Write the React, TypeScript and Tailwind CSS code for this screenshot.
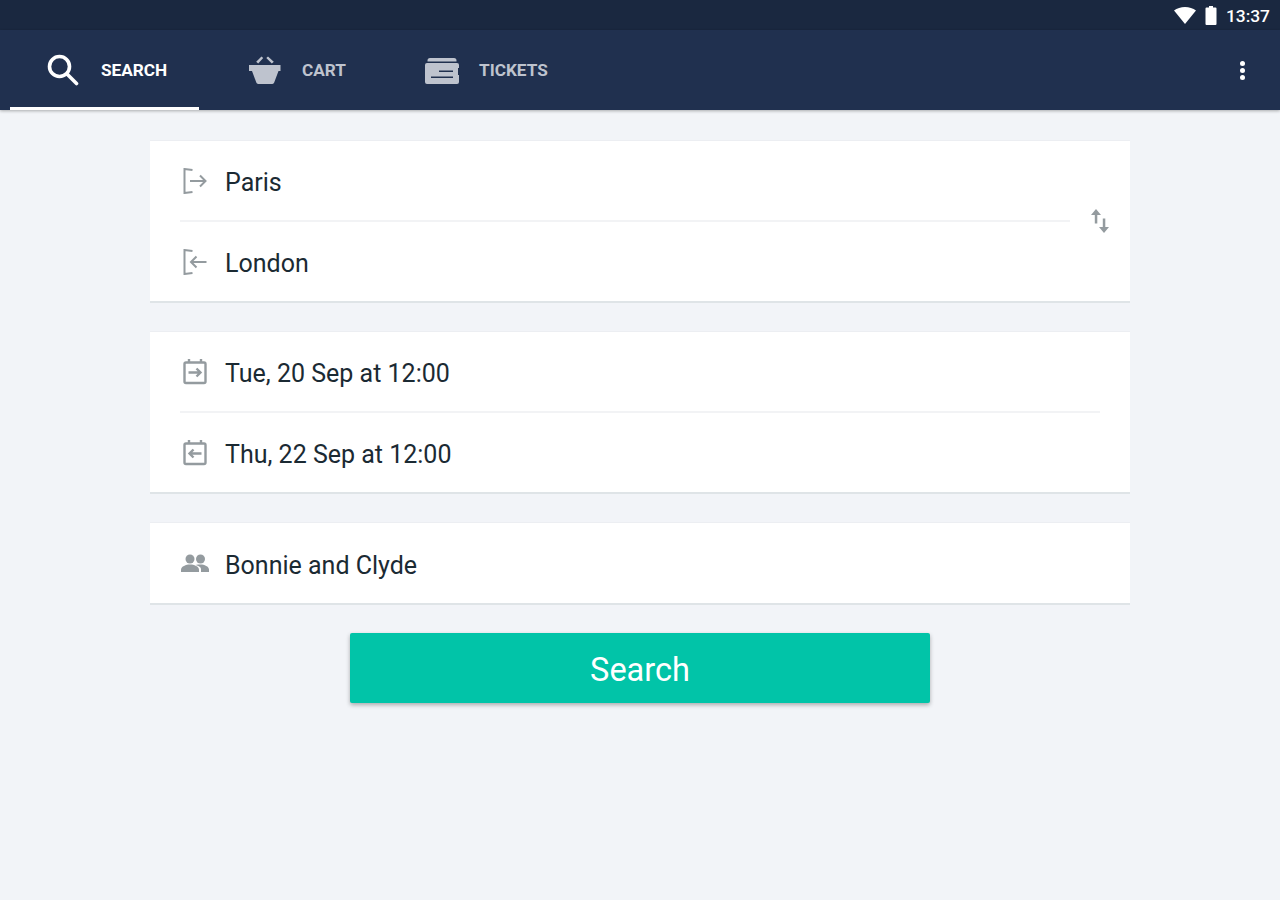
import React from 'react'

function SearchIcon() {
  return (
    <svg width="32" height="32" viewBox="0 0 32 32" fill="none" stroke="#fff" strokeWidth="3.6">
      <circle cx="12.500" cy="12.500" r="10" />
      <path d="M20 20 L29.500 29.500" strokeLinecap="round" />
    </svg>
  )
}

function BasketIcon() {
  return (
    <svg width="32" height="30" viewBox="0 0 32 30" fill="#bec3ce">
      <path d="M0 10h31.500v6h-2l-4.300 11.500a2 2 0 0 1-1.900 1.500H9.200a2 2 0 0 1-1.900-1.500L3 16H0z" />
      <path d="M7.200 6.800L12.500 1.500l1.700 1.500-5 5.500zM24.800 6.800L19 1.500l-1.700 1.500 5.500 5.500z" />
    </svg>
  )
}

function TicketIcon() {
  return (
    <svg className="mt-[2px]" width="34" height="26" viewBox="0 0 34 26" fill="#bec3ce">
      <path d="M5 0h24a2.500 2.500 0 0 1 2.500 2.500V3.500H2.500V2.500A2.500 2.500 0 0 1 5 0z" />
      <path d="M2 5h30a2 2 0 0 1 2 2v3h-1v7h1v7a2 2 0 0 1-2 2H2a2 2 0 0 1-2-2V7a2 2 0 0 1 2-2z" />
      <path d="M14 12.500h14v1.600H14zM6 18.500h22v1.600H6z" fill="#20304f" />
    </svg>
  )
}

function DoorIcon({ out }: { out: boolean }) {
  return (
    <svg width="24" height="26" viewBox="0 0 24 26" fill="none" stroke="#949b9f" strokeWidth="2">
      <path d="M9.500 2 L1.500 1 V25 L9.500 24" />
      {out ? (
        <path d="M7 13h15.500M17 7.500l5.500 5.500-5.500 5.500" />
      ) : (
        <path d="M23.500 13H8M13.500 7.500L8 13l5.500 5.500" />
      )}
    </svg>
  )
}

function CalendarIcon({ out }: { out: boolean }) {
  return (
    <svg width="24" height="26" viewBox="0 0 24 26" fill="none" stroke="#949b9f" strokeWidth="2.400">
      <rect x="1.500" y="3.500" width="21" height="20.500" rx="1.500" />
      <path d="M6 0v3.500M18 0v3.500" />
      {out ? (
        <path d="M5.500 13.500h12M13.500 9.500l4 4-4 4" />
      ) : (
        <path d="M18.500 13.500h-12M10.500 9.500l-4 4 4 4" />
      )}
    </svg>
  )
}

function PeopleIcon() {
  return (
    <svg width="28" height="18" viewBox="0 0 28 18" fill="#949b9f">
      <circle cx="9" cy="5" r="4.500" />
      <circle cx="19.500" cy="5" r="4.500" />
      <path d="M0 18v-2.500C0 12.500 5 10.500 9 10.500s9 2 9 5V18z" />
      <path d="M14.500 10.900c1.600-.3 3.600-.4 5-.4 3.800 0 8.500 2 8.500 5V18h-8v-3c0-1.700-2-3.300-5.500-4.100z" />
    </svg>
  )
}

function SwapIcon() {
  return (
    <svg width="20" height="24" viewBox="0 0 20 24" fill="#949b9f">
      <path d="M6 0l5 6H7.300v8.500H4.800V6H1z" />
      <path d="M14 24l5-6h-3.700V9.500h-2.500V18H9z" />
    </svg>
  )
}

function Row({ icon, label, tall }: { icon: React.ReactNode; label: string; tall?: boolean }) {
  return (
    <div className={tall ? 'flex items-center h-[80px] pl-[30px]' : 'flex items-center h-[79px] pl-[30px]'}>
      <div className="w-[30px] flex justify-center">{icon}</div>
      <span className="ml-[15px] mt-[5px] text-[25px] text-[#1b2a33]">{label}</span>
    </div>
  )
}

export default function App() {
  return (
    <div className="min-h-[900px] bg-[#f2f4f8]" style={{ fontFamily: 'Roboto, sans-serif' }}>
      {/* Status bar */}
      <div className="h-[30px] bg-[#1a2840] flex items-center justify-end pr-[10px]">
        <svg width="22" height="17" viewBox="0 0 22 17" fill="#fff">
          <path d="M0 3.500C3 1.200 6.800 0 11 0s8 1.200 11 3.500L11 17z" />
        </svg>
        <svg className="ml-[9px]" width="12" height="19" viewBox="0 0 12 19" fill="#fff">
          <path d="M4 0h4v1.500h2.500a1 1 0 0 1 1 1V18a1 1 0 0 1-1 1h-9a1 1 0 0 1-1-1V2.500a1 1 0 0 1 1-1H4z" />
        </svg>
        <span className="ml-[9px] mt-[2px] text-[17.400px] font-medium text-white">13:37</span>
      </div>

      {/* Tabs */}
      <div className="h-[80px] bg-[#20304f] flex items-stretch shadow-[0_1px_3px_rgba(0,0,0,0.3)]">
        <div className="ml-[10px] w-[189px] pl-[37px] pt-[3px] flex items-center border-b-[3px] border-white">
          <SearchIcon />
          <span className="ml-[22px] mt-px text-[17.200px] font-bold text-white">SEARCH</span>
        </div>
        <div className="ml-[50px] w-[176px] flex items-center">
          <BasketIcon />
          <span className="ml-[21px] mt-px text-[17.200px] font-bold text-[#bec3ce]">CART</span>
        </div>
        <div className="flex items-center">
          <TicketIcon />
          <span className="ml-[20px] mt-px text-[17.200px] font-bold text-[#bec3ce]">TICKETS</span>
        </div>
        <div className="ml-auto mr-[35px] flex flex-col justify-center gap-[2px]">
          <span className="w-[5px] h-[5px] rounded-full bg-white" />
          <span className="w-[5px] h-[5px] rounded-full bg-white" />
          <span className="w-[5px] h-[5px] rounded-full bg-white" />
        </div>
      </div>

      {/* Form */}
      <div className="w-[980px] mx-auto pt-[30px] flex flex-col gap-[28px]">
        <div className="bg-white border-t border-t-[#eceef2] border-b-2 border-b-[#dfe4e7] flex items-center">
          <div className="flex-1">
            <Row icon={<DoorIcon out />} label="Paris" />
            <div className="ml-[30px] h-[2px] bg-[#f2f3f5]" />
            <Row icon={<DoorIcon out={false} />} label="London" />
          </div>
          <div className="w-[60px] flex justify-center">
            <SwapIcon />
          </div>
        </div>

        <div className="bg-white border-t border-t-[#eceef2] border-b-2 border-b-[#dfe4e7]">
          <Row icon={<CalendarIcon out />} label="Tue, 20 Sep at 12:00" />
          <div className="mx-[30px] h-[2px] bg-[#f2f3f5]" />
          <Row icon={<CalendarIcon out={false} />} label="Thu, 22 Sep at 12:00" />
        </div>

        <div className="bg-white border-t border-t-[#eceef2] border-b-2 border-b-[#dfe4e7]">
          <Row tall icon={<PeopleIcon />} label="Bonnie and Clyde" />
        </div>

        <button className="w-[580px] h-[70px] mx-auto pt-[4px] bg-[#01c4a8] text-white text-[32.500px] rounded-[2px] shadow-[0_2px_4px_rgba(0,0,0,0.3)]">
          Search
        </button>
      </div>
    </div>
  )
}
